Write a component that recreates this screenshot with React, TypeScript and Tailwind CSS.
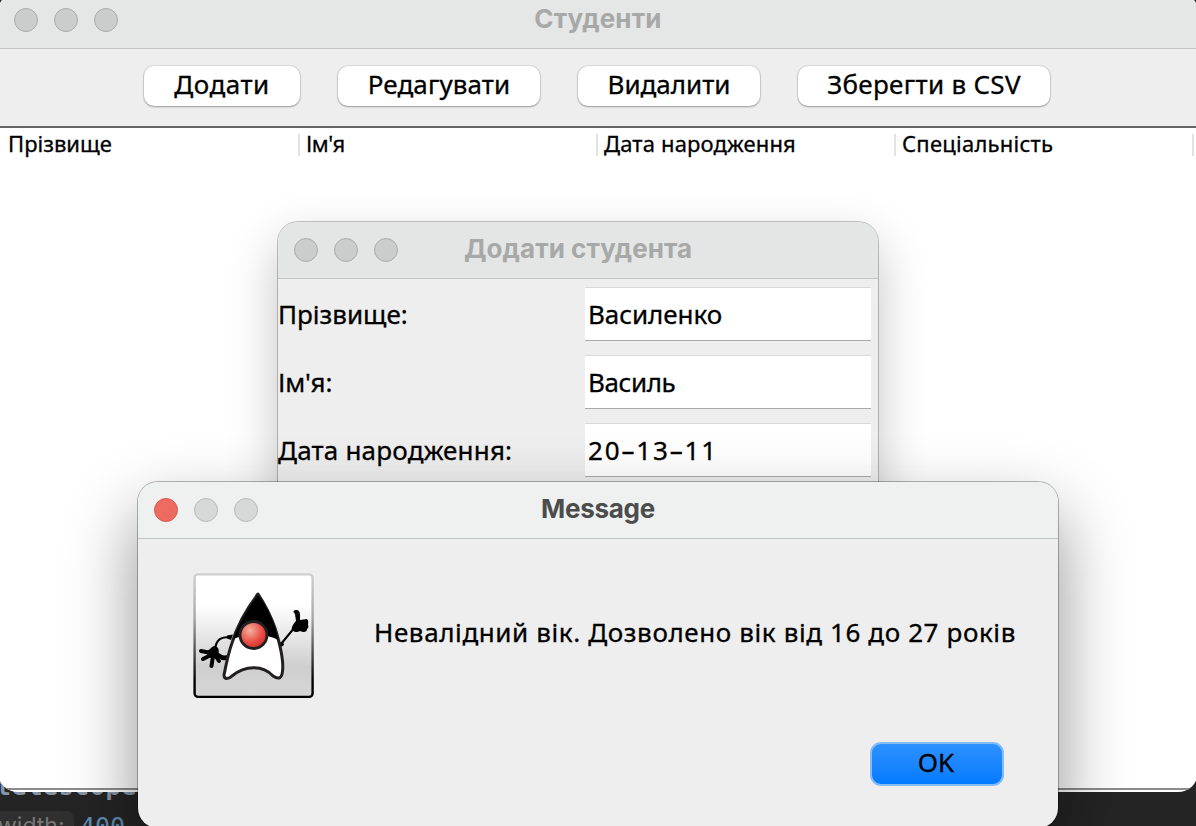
import type { ReactNode } from 'react';

const lucida = "font-['Noto_Sans','Liberation_Sans',sans-serif] text-black whitespace-nowrap [-webkit-text-stroke:0.3px_#000]";

function Lights({ active = false }: { active?: boolean }) {
  const idle = active ? 'border-[#b9bbba] bg-[#d7d9d8]' : 'border-[#a9abaa] bg-[#cbcdcc]';
  return (
    <div className="flex w-[132px] shrink-0 gap-4 pl-4">
      <span className={`size-6 rounded-full border ${active ? 'border-[#d95a4f] bg-[#ed6b60]' : idle}`} />
      <span className={`size-6 rounded-full border ${idle}`} />
      <span className={`size-6 rounded-full border ${idle}`} />
    </div>
  );
}

function TitleBar({ title, active = false, bg, spacing }: { title: string; active?: boolean; bg: string; spacing: string }) {
  return (
    <div className={`flex h-[57px] shrink-0 items-center rounded-t-[20px] border-b border-[#c4c6c5] ${bg}`}>
      <Lights active={active} />
      <div className={`flex-1 pr-[132px] pb-0.5 text-center font-['Inter','Liberation_Sans',sans-serif] text-[26px] leading-[30px] font-bold whitespace-nowrap ${spacing} ${active ? 'text-[#4b4c4c]' : 'text-[#a7a9a8]'}`}>
        <span>{title}</span>
      </div>
    </div>
  );
}

function ToolButton({ children, width, spacing }: { children: ReactNode; width: string; spacing: string }) {
  return (
    <button className={`flex h-10 items-center justify-center rounded-[10px] bg-white text-[26px] shadow-[0_0_0_1px_rgba(0,0,0,0.08),0_1px_2px_rgba(0,0,0,0.3)] ${spacing} ${lucida} ${width}`}>
      <span className="-mt-1">{children}</span>
    </button>
  );
}

function Column({ children, spacing }: { children: ReactNode; spacing: string }) {
  return (
    <div className={`h-[22px] w-[298px] border-r-2 border-[#e2e2e2] pl-1.5 text-[22px] leading-[19px] ${spacing} ${lucida}`}>
      <span>{children}</span>
    </div>
  );
}

function Field({ label, value, labelSpacing, valueSpacing }: { label: string; value: string; labelSpacing: string; valueSpacing: string }) {
  return (
    <div className={`flex h-[54px] items-center text-[26px] ${lucida}`}>
      <div className={`w-[307px] ${labelSpacing}`}>{label}</div>
      <div className={`flex h-[54px] w-[286px] items-center border-t border-b border-t-[#dadada] border-b-[#a9a9a9] bg-white pl-[3px] ${valueSpacing}`}>
        {value}
      </div>
    </div>
  );
}

function Duke() {
  return (
    <svg className="h-[126px] w-[122px]" viewBox="0 0 122 126">
      <defs>
        <linearGradient id="plate" x1="0" y1="0" x2="0" y2="1">
          <stop offset="0.25" stopColor="#fff" />
          <stop offset="0.75" stopColor="#cfcfcf" />
          <stop offset="1" stopColor="#d6d6d6" />
        </linearGradient>
        <linearGradient id="rim" x1="0" y1="0" x2="0" y2="1">
          <stop offset="0" stopColor="#cfcfcf" />
          <stop offset="0.35" stopColor="#a8a8a8" />
          <stop offset="0.88" stopColor="#000" />
        </linearGradient>
        <radialGradient id="nose" cx="0.37" cy="0.33" r="0.7">
          <stop offset="0" stopColor="#f5b09c" />
          <stop offset="0.65" stopColor="#e94b44" />
          <stop offset="1" stopColor="#cf302d" />
        </radialGradient>
      </defs>
      <rect x="1.600" y="1.400" width="118" height="122.500" rx="3.500" fill="url(#plate)" stroke="url(#rim)" strokeWidth="2.400" />
      <path d="M37 64C28 64 23 66 22 77" fill="none" stroke="#000" strokeWidth="2.200" />
      <path d="M34 62.500L40 61.500L38 67L34 65.500ZM25 79C28 82 30 83 35 82L33 87C29 88 26 86 23 82Z" />
      <path d="M88 71L102 54" fill="none" stroke="#000" strokeWidth="2" />
      <path d="M86 70L90 68L91 72L88 74Z" />
      <path d="M8 78L18 80M10 86L18 82M18.500 93L20 83M26 88L22 82" fill="none" stroke="#000" strokeWidth="4" strokeLinecap="round" />
      <path d="M13 78C16 78 18 74 21 73C25 73 27 77 25 81C24 85 20 86 16 84Z" />
      <path d="M102 41C99 38 101 37 104 37C108 38 107 43 107 47L114 46C116 48 115 50 115 52C116 54 115 55 114 56C114 59 111 60 107 58C104 60 101 59 99 57C98 54 101 50 103 48Z" fill="#000" />
      <path d="M65 21C55 34 44 53 39 70C35 81 32 97 31 102C31 107 36 106 39 103C52 92 70 92 80 103C86 107 89 105 89.500 98C91 87 86 68 82 55C77 41 71 30 65 21Z" fill="#fff" stroke="#231f20" strokeWidth="3" strokeLinejoin="round" />
      <path d="M65 22C55 35 45 52 40.500 66C52 61 74 60 85 67C82 48 73 32 65 22Z" fill="#000" />
      <circle cx="60.500" cy="62" r="13.500" fill="url(#nose)" stroke="#231f20" strokeWidth="2.800" />
    </svg>
  );
}

export default function App() {
  return (
    <main className="relative h-[826px] w-[1196px] overflow-hidden bg-[#242424]">
      <div className="absolute top-[773px] left-[-4px] font-['DejaVu_Sans_Mono',monospace] text-[25px] leading-[28px] font-bold tracking-[0.6px] whitespace-nowrap text-[#8795a6]">
        telescope
      </div>
      <div className="absolute top-[811px] left-[-20px] flex h-[30px] w-[94px] items-center rounded-lg bg-[#303030] font-['Inter',sans-serif] text-[23px] text-[#777777]">
        <span className="pl-[18px]">width:</span>
      </div>
      <div className="absolute top-[812px] left-[80px] font-['DejaVu_Sans_Mono',monospace] text-[25px] leading-[30px] text-[#5e8cb0]">400</div>

      <section className="absolute top-[-8px] left-[-2px] flex h-[800px] w-[1200px] flex-col overflow-hidden rounded-[20px] bg-white">
        <TitleBar title="Студенти" bg="bg-[#e5e6e6]" spacing="tracking-[0.15px]" />
        <div className="flex h-[79px] shrink-0 gap-[38px] border-b-2 border-[#666465] bg-[#eeeeee] pt-[17px] pl-[146px]">
          <ToolButton width="w-[156px]" spacing="tracking-[0.5px]">Додати</ToolButton>
          <ToolButton width="w-[202px]" spacing="tracking-[0.1px]">Редагувати</ToolButton>
          <ToolButton width="w-[182px]" spacing="tracking-normal">Видалити</ToolButton>
          <ToolButton width="w-[252px]" spacing="tracking-[0.33px]">Зберегти в CSV</ToolButton>
        </div>
        <div className="flex flex-1 border-b-2 border-[#8b8b89] pt-1.5 pl-1">
          <Column spacing="tracking-normal">Прізвище</Column>
          <Column spacing="tracking-[-0.5px]">Ім'я</Column>
          <Column spacing="tracking-[0.15px]">Дата народження</Column>
          <Column spacing="tracking-[0.25px]">Спеціальність</Column>
        </div>
        <div className="h-0.5 shrink-0" />
      </section>

      <section className="absolute top-[222px] left-[278px] flex h-[420px] w-[600px] flex-col rounded-[20px] bg-[#eeeeee] shadow-[0_0_0_1px_rgba(0,0,0,0.22),0_20px_50px_rgba(0,0,0,0.24)]">
        <TitleBar title="Додати студента" bg="bg-[#e4e6e5]" spacing="tracking-[0.05px]" />
        <div className="flex flex-col gap-[14px] pt-2">
          <Field label="Прізвище:" value="Василенко" labelSpacing="tracking-normal" valueSpacing="tracking-[-0.05px]" />
          <Field label="Ім'я:" value="Василь" labelSpacing="tracking-[-0.2px]" valueSpacing="tracking-[-0.4px]" />
          <Field label="Дата народження:" value="20–13–11" labelSpacing="tracking-[0.2px]" valueSpacing="tracking-[1.850px]" />
        </div>
      </section>

      <section className="absolute top-[482px] left-[138px] flex h-[346px] w-[920px] flex-col rounded-[20px] bg-[#eeeeee] shadow-[0_0_0_1px_rgba(0,0,0,0.28),0_32px_70px_rgba(0,0,0,0.44)]">
        <TitleBar title="Message" active bg="bg-[#eff1f0]" spacing="tracking-[-0.25px]" />
        <div className="flex h-[203px] pt-[34px] pl-[55px]">
          <Duke />
          <div className={`pt-[41px] pl-[59px] text-[26px] leading-[36px] tracking-[0.61px] ${lucida}`}>
            <span>Невалідний вік. Дозволено вік від 16 до 27 років</span>
          </div>
        </div>
        <div className="flex justify-end pr-[54px]">
          <button className={`flex h-[44px] w-[134px] items-center justify-center rounded-[11px] border-2 border-[#85bbf8] bg-linear-to-b from-[#2d91ff] to-[#007aff] text-[26px] ${lucida}`}>
            <span className="-mt-1 pr-0.5">OK</span>
          </button>
        </div>
      </section>
    </main>
  );
}
